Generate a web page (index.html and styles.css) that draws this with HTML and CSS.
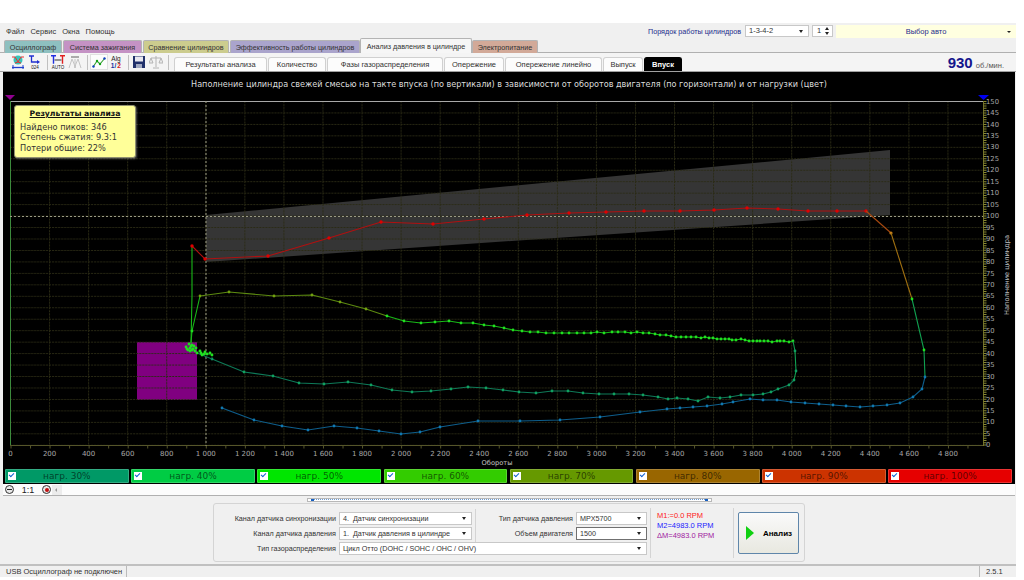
FILE: index.html
```html
<!DOCTYPE html>
<html lang="ru">
<head>
    <meta charset="UTF-8">
    <title>Анализ давления в цилиндре</title>
    <link rel="stylesheet" href="styles.css">
</head>
<body>
<div class="window">
    <div class="topbar">
        <div class="menu">
            <span>Файл</span>
            <span>Сервис</span>
            <span>Окна</span>
            <span>Помощь</span>
        </div>
        <div class="top-controls">
            <span class="order-label">Порядок работы цилиндров</span>
            <div class="select order-select">1-3-4-2</div>
            <div class="spinner">1<span class="spin-arrows"></span></div>
            <div class="car-select">Выбор авто</div>
        </div>
    </div>

    <div class="tabs">
        <div class="tab tab-teal">Осциллограф</div>
        <div class="tab tab-pink">Система зажигания</div>
        <div class="tab tab-olive">Сравнение цилиндров</div>
        <div class="tab tab-violet">Эффективность работы цилиндров</div>
        <div class="tab tab-active">Анализ давления в цилиндре</div>
        <div class="tab tab-brown">Электропитание</div>
    </div>

    <div class="toolbar">
        <div class="tools">
            <!-- network -->
            <svg class="tool" viewBox="0 0 14 14">
                <circle cx="7" cy="5" r="4.500" fill="#38c4b8"/>
                <path d="M1 2h3l3 5 3-5h3M4 8l3-1 3 1" stroke="#e83030" fill="none"/>
                <path d="M1 12.500h12" stroke="#2040d0" stroke-width="1.300"/>
                <path d="M2 10v4M12 10v4" stroke="#2040d0"/>
            </svg>
            <!-- cursor 024 -->
            <svg class="tool tool-gap" viewBox="0 0 14 14">
                <path d="M1 1h5M3.500 1v6h7" stroke="#2030d0" fill="none" stroke-width="1.300"/>
                <path d="M9 5l3 2-3 2z" fill="#2030d0"/>
                <text class="tool-text" x="7" y="13.500">024</text>
            </svg>
            <span class="tool-sep"></span>
            <!-- auto -->
            <svg class="tool" viewBox="0 0 14 14">
                <path d="M0 .800h5M2.500 .800v8" stroke="#2030e0" stroke-width="1.400" fill="none"/>
                <path d="M9 .800h5M11.500 .800v8" stroke="#e02020" stroke-width="1.400" fill="none"/>
                <path d="M3.500 5h7" stroke="#333"/>
                <text class="tool-text" x="7" y="13.500">AUTO</text>
            </svg>
            <!-- cylinder, off -->
            <svg class="tool tool-gap" viewBox="0 0 14 14">
                <path d="M3 1h8v2H3z" fill="#aaa"/>
                <path d="M4 4L1 13M7 4v9M10 4l3 9M4 4q3 6 3 9M10 4q-3 6-3 9" stroke="#c4c4c4" fill="none"/>
            </svg>
            <span class="tool-sep"></span>
            <!-- curve -->
            <svg class="tool tool-on" viewBox="0 0 16 14">
                <path d="M2 12L6 6l3 3 5-6" stroke="#30a030" stroke-width="1.100" fill="none"/>
                <circle cx="2.500" cy="11.500" r="1.200" fill="#1040c0"/>
                <circle cx="6" cy="6" r="1.200" fill="#10a010"/>
                <circle cx="9" cy="9" r="1.200" fill="#10a010"/>
                <circle cx="13.500" cy="3.500" r="1.200" fill="#1040c0"/>
            </svg>
            <!-- algorithm -->
            <svg class="tool tool-alg" viewBox="0 0 14 14">
                <text class="alg-top" x="7" y="6">Alg</text>
                <text class="alg-one" x="4.500" y="13">1/</text>
                <text class="alg-two" x="10" y="13">2</text>
            </svg>
            <span class="tool-sep"></span>
            <!-- save -->
            <svg class="tool" viewBox="0 0 14 14">
                <path d="M1 1h12v12H1z" fill="#20306a"/>
                <path d="M3 1.500h8v5H3z" fill="#e8e8f0"/>
                <path d="M4 9h6v4H4z" fill="#a0a8c0"/>
            </svg>
            <!-- scales, off -->
            <svg class="tool tool-gap" viewBox="0 0 14 14">
                <path d="M7 1v11M4 13h6M2 3h10" stroke="#b4b4b4" fill="none"/>
                <path d="M2 3L0 8h4zM12 3l-2 5h4z" stroke="#b4b4b4" fill="#eee"/>
            </svg>
            <span class="tool-sep"></span>
        </div>
        <div class="subtabs">
            <div class="subtab sub-results">Результаты анализа</div>
            <div class="subtab sub-count">Количество</div>
            <div class="subtab sub-phases">Фазы газораспределения</div>
            <div class="subtab sub-advance">Опережение</div>
            <div class="subtab sub-linear">Опережение линейно</div>
            <div class="subtab sub-exhaust">Выпуск</div>
            <div class="subtab subtab-active">Впуск</div>
        </div>
        <div class="rpm"><b>930</b> об./мин.</div>
    </div>

    <div class="chart">
        <svg class="plot" viewBox="3 72 1012 396">
            <defs>
                <pattern id="grid" x="10" y="101" width="39.060" height="11.460" patternUnits="userSpaceOnUse">
                    <path class="grid-line" d="M.5 0V11.460M0 .5H39.060"/>
                </pattern>
                <marker id="dot-red" markerWidth="5" markerHeight="5" refX="2.500" refY="2.500" markerUnits="userSpaceOnUse">
                    <circle cx="2.500" cy="2.500" r="1.700" fill="#e00000"/>
                </marker>
                <marker id="dot-orange" markerWidth="5" markerHeight="5" refX="2.500" refY="2.500" markerUnits="userSpaceOnUse">
                    <circle cx="2.500" cy="2.500" r="1.600" fill="#c8801a"/>
                </marker>
                <marker id="dot-lime" markerWidth="5" markerHeight="5" refX="2.500" refY="2.500" markerUnits="userSpaceOnUse">
                    <circle cx="2.500" cy="2.500" r="1.400" fill="#20e020"/>
                </marker>
                <marker id="dot-olive" markerWidth="5" markerHeight="5" refX="2.500" refY="2.500" markerUnits="userSpaceOnUse">
                    <circle cx="2.500" cy="2.500" r="1.400" fill="#70a010"/>
                </marker>
                <marker id="dot-teal" markerWidth="5" markerHeight="5" refX="2.500" refY="2.500" markerUnits="userSpaceOnUse">
                    <circle cx="2.500" cy="2.500" r="1.400" fill="#10a060"/>
                </marker>
                <marker id="dot-blue" markerWidth="5" markerHeight="5" refX="2.500" refY="2.500" markerUnits="userSpaceOnUse">
                    <circle cx="2.500" cy="2.500" r="1.400" fill="#1078b0"/>
                </marker>
            </defs>

            <text class="plot-title" x="509" y="84">Наполнение цилиндра свежей смесью на такте впуска (по вертикали) в зависимости от оборотов двигателя (по горизонтали) и от нагрузки (цвет)</text>

            <rect class="zone-purple" x="137" y="342" width="60" height="58"/>
            <polygon class="zone-gray" points="206,215 890,150 890,215 206,262"/>
            <rect x="10" y="101" width="973" height="345" fill="url(#grid)"/>

            <path class="axis-top" d="M10 101.500H983"/>
            <path class="axis-left" d="M10.500 101V446"/>
            <path class="axis-right" d="M983.500 101V446"/>
            <path class="axis-right-ticks" d="M985 101V446"/>
            <path class="axis-bottom" d="M10 445.500H983"/>
            <path class="axis-bottom-ticks" d="M10.500 447H983"/>
            <path class="cross" d="M206 101V446M10 216.500H983"/>

            <polygon class="flag-purple" points="5,95 15,95 10,100"/>
            <polygon class="flag-blue" points="978,95 989,95 983.500,100"/>

            <!-- 100% -->
            <polyline class="curve c-lime" points="192,246 192,296 191,343"/>
            <polyline class="curve c-red" marker-start="url(#dot-red)" marker-mid="url(#dot-red)" marker-end="url(#dot-red)"
                points="192,246 205,259 268,256 329,238 381,222 433,224 484,219 527,215 569,213 606,212 644,211 680,211 714,210 747,208 778,209 808,211 837,211 866,211"/>
            <polyline class="curve c-orange" marker-end="url(#dot-orange)" points="866,211 891,233"/>
            <polyline class="curve c-amber" points="891,233 912,299"/>
            <polyline class="curve c-green" marker-start="url(#dot-lime)" marker-mid="url(#dot-lime)" points="912,299 924,350 925,377"/>
            <polyline class="curve c-blue" marker-start="url(#dot-blue)" marker-mid="url(#dot-blue)" marker-end="url(#dot-blue)"
                points="925,377 922,389 913,397 900,403 887,405 873,406 860,407 846,406 833,405 819,404 805,403 791,402 777,400 763,400 750,399 733,402 722,404 707,406 693,407 680,408 667,409 640,412 600,417 560,420 520,421 478,421 440,427 420,432 401,434 379,431 357,428 334,426 308,430 282,426 254,420 222,408"/>

            <!-- 40-70% -->
            <polyline class="curve c-lime" marker-mid="url(#dot-lime)" points="191,343 192,331 200,296"/>
            <polyline class="curve c-olive" marker-start="url(#dot-olive)" marker-mid="url(#dot-olive)"
                points="200,296 229,292 274,296 312,295 340,302 366,309 387,316"/>
            <polyline class="curve c-lime" marker-start="url(#dot-lime)" marker-mid="url(#dot-lime)" marker-end="url(#dot-lime)"
                points="387,316 404,321 421,323 435,322 449,321 461,323 473,323 484,325 494,326 504,328 513,330 522,331 530,332 538,332 546,333 554,333 562,333 569,333 577,333 584,333 591,333 597,332 604,333 612,332 618,332 625,332 631,333 637,332 643,333 649,333 655,334 660,335 666,335 671,336 676,337 681,337 686,337 691,337 696,337 701,338 705,337 709,338 713,338 717,339 721,339 725,339 729,339 732,340 736,340 741,339 745,340 749,341 753,341 757,341 760,341 764,341 768,341 772,342 777,341 780,341 784,341 789,342 793,341"/>
            <polyline class="curve c-green" marker-mid="url(#dot-teal)" points="793,341 795,351 796,371 794,380"/>
            <polyline class="curve c-teal" marker-start="url(#dot-teal)" marker-mid="url(#dot-teal)" marker-end="url(#dot-teal)"
                points="794,380 789,385 778,389 771,392 763,394 753,395 741,395 730,397 720,398 708,397 698,401 688,399 677,398 668,399 658,397 643,395 629,394 614,394 599,394 583,393 568,391 552,391 536,393 519,392 503,390 486,388 468,387 451,389 431,391 412,392 392,390 371,385 348,382 324,384 299,383 273,376 244,372 212,359"/>
            <polyline class="curve c-teal" points="212,359 197,353"/>
            <polyline class="cluster" marker-start="url(#dot-lime)" marker-mid="url(#dot-lime)" marker-end="url(#dot-lime)"
                points="186,347 189,344 192,345 190,348 194,346 188,350 192,350 196,348 191,346 187,349 193,349 190,351 195,351 197,353 200,351 202,355 205,352 207,354 210,353 212,355 204,354 201,353"/>

            <text class="y-label" x="986" y="102">150</text>
            <text class="y-label" x="986" y="113">145</text>
            <text class="y-label" x="986" y="125">140</text>
            <text class="y-label" x="986" y="136">135</text>
            <text class="y-label" x="986" y="147">130</text>
            <text class="y-label" x="986" y="159">125</text>
            <text class="y-label" x="986" y="170">120</text>
            <text class="y-label" x="986" y="182">115</text>
            <text class="y-label" x="986" y="193">110</text>
            <text class="y-label" x="986" y="205">105</text>
            <text class="y-label" x="986" y="216">100</text>
            <text class="y-label" x="986" y="228">95</text>
            <text class="y-label" x="986" y="239">90</text>
            <text class="y-label" x="986" y="251">85</text>
            <text class="y-label" x="986" y="262">80</text>
            <text class="y-label" x="986" y="274">75</text>
            <text class="y-label" x="986" y="285">70</text>
            <text class="y-label" x="986" y="296">65</text>
            <text class="y-label" x="986" y="308">60</text>
            <text class="y-label" x="986" y="319">55</text>
            <text class="y-label" x="986" y="331">50</text>
            <text class="y-label" x="986" y="342">45</text>
            <text class="y-label" x="986" y="354">40</text>
            <text class="y-label" x="986" y="365">35</text>
            <text class="y-label" x="986" y="377">30</text>
            <text class="y-label" x="986" y="388">25</text>
            <text class="y-label" x="986" y="400">20</text>
            <text class="y-label" x="986" y="411">15</text>
            <text class="y-label" x="986" y="422">10</text>
            <text class="y-label" x="986" y="434">5</text>
            <text class="y-label" x="986" y="445">0</text>

            <text class="x-label" x="10.500" y="456">0</text>
            <text class="x-label" x="49.600" y="456">200</text>
            <text class="x-label" x="88.600" y="456">400</text>
            <text class="x-label" x="127.700" y="456">600</text>
            <text class="x-label" x="166.700" y="456">800</text>
            <text class="x-label" x="205.800" y="456">1 000</text>
            <text class="x-label" x="244.900" y="456">1 200</text>
            <text class="x-label" x="283.900" y="456">1 400</text>
            <text class="x-label" x="323" y="456">1 600</text>
            <text class="x-label" x="362" y="456">1 800</text>
            <text class="x-label" x="401.100" y="456">2 000</text>
            <text class="x-label" x="440.200" y="456">2 200</text>
            <text class="x-label" x="479.200" y="456">2 400</text>
            <text class="x-label" x="518.300" y="456">2 600</text>
            <text class="x-label" x="557.300" y="456">2 800</text>
            <text class="x-label" x="596.400" y="456">3 000</text>
            <text class="x-label" x="635.500" y="456">3 200</text>
            <text class="x-label" x="674.500" y="456">3 400</text>
            <text class="x-label" x="713.600" y="456">3 600</text>
            <text class="x-label" x="752.600" y="456">3 800</text>
            <text class="x-label" x="791.700" y="456">4 000</text>
            <text class="x-label" x="830.800" y="456">4 200</text>
            <text class="x-label" x="869.800" y="456">4 400</text>
            <text class="x-label" x="908.900" y="456">4 600</text>
            <text class="x-label" x="947.900" y="456">4 800</text>

            <text class="axis-title" x="497" y="465">Обороты</text>
            <text class="axis-title" transform="translate(1009 275) rotate(-90)">Наполнение цилиндра</text>
        </svg>

        <div class="results">
            <div class="results-title">Результаты анализа</div>
            <div>Найдено пиков: 346</div>
            <div>Степень сжатия: 9.3:1</div>
            <div>Потери общие: 22%</div>
        </div>

        <div class="loads">
            <div class="load load-30"><span class="check"></span>нагр. 30%</div>
            <div class="load load-40"><span class="check"></span>нагр. 40%</div>
            <div class="load load-50"><span class="check"></span>нагр. 50%</div>
            <div class="load load-60"><span class="check"></span>нагр. 60%</div>
            <div class="load load-70"><span class="check"></span>нагр. 70%</div>
            <div class="load load-80"><span class="check"></span>нагр. 80%</div>
            <div class="load load-90"><span class="check"></span>нагр. 90%</div>
            <div class="load load-100"><span class="check"></span>нагр. 100%</div>
        </div>
    </div>

    <div class="zoombar">
        <span class="zoom-btn zoom-minus"></span>
        <span class="zoom-value">1:1</span>
        <span class="zoom-btn zoom-plus"></span>
        <span class="scroll-left"></span>
    </div>

    <div class="bottom">
        <div class="splitter"></div>
        <div class="panel">
            <div class="fields">
                <label class="field-label">Канал датчика синхронизации</label>
                <div class="select">4.&nbsp; Датчик синхронизации</div>
                <label class="field-label field-split">Тип датчика давления</label>
                <div class="select">MPX5700</div>
                <label class="field-label">Канал датчика давления</label>
                <div class="select">1.&nbsp; Датчик давления в цилиндре</div>
                <label class="field-label field-split">Объем двигателя</label>
                <div class="select select-focus">1500</div>
                <label class="field-label">Тип газораспределения</label>
                <div class="select select-wide">Цикл Отто (DOHC / SOHC / OHC / OHV)</div>
            </div>
            <div class="readouts">
                <div class="m1">M1:=0.0 RPM</div>
                <div class="m2">M2=4983.0 RPM</div>
                <div class="dm">ΔM=4983.0 RPM</div>
            </div>
            <div class="action">
                <button class="analyze"><span class="play"></span>Анализ</button>
            </div>
        </div>
    </div>

    <div class="status">
        <div class="status-main">USB Осциллограф не подключен</div>
        <div class="status-fill"></div>
        <div class="status-ver">2.5.1</div>
    </div>
</div>
</body>
</html>
```

FILE: styles.css
```css
body {
    margin: 0;
    height: 580px;
    overflow: hidden;
    background: #fff;
    font-family: 'Liberation Sans', Arial, sans-serif;
    font-size: 7.500px;
    color: #333;
}

.window {
    width: 1016px;
    height: 554px;
    margin-top: 23px;
    background: #f0f0f0;
    display: flex;
    flex-direction: column;
}

/* top line */
.topbar {
    height: 17px;
    display: flex;
    align-items: center;
    flex-shrink: 0;
}

.menu {
    display: flex;
    gap: 6px;
    padding-left: 6px;
}

.top-controls {
    margin-left: auto;
    display: flex;
    align-items: center;
    margin-top: -1px;
}

.order-label {
    color: #1c2c8c;
    font-size: 7.200px;
    margin-right: 4px;
}

.select {
    position: relative;
    box-sizing: border-box;
    height: 13px;
    line-height: 11px;
    padding-left: 3px;
    background: #fff;
    border: 1px solid #c8c8c8;
    white-space: nowrap;
}

.select::after {
    content: "";
    position: absolute;
    right: 5px;
    top: 4px;
    border: 2.500px solid transparent;
    border-top: 3px solid #222;
    border-bottom: 0;
}

.order-select {
    width: 64px;
    height: 12px;
    line-height: 10px;
}

.spinner {
    box-sizing: border-box;
    position: relative;
    width: 21px;
    height: 12px;
    line-height: 10px;
    margin-left: 3px;
    padding-left: 4px;
    background: #fff;
    border: 1px solid #c8c8c8;
}

.spin-arrows {
    position: absolute;
    right: 3px;
    top: 1px;
    width: 0;
    height: 0;
    border-left: 2.500px solid transparent;
    border-right: 2.500px solid transparent;
    border-bottom: 3px solid #222;
}

.spin-arrows::after {
    content: "";
    position: absolute;
    left: -2.500px;
    top: 5px;
    border-left: 2.500px solid transparent;
    border-right: 2.500px solid transparent;
    border-top: 3px solid #222;
}

.car-select {
    position: relative;
    width: 180px;
    height: 13px;
    line-height: 13px;
    margin-left: 3px;
    background: #ffffe0;
    color: #1c2c8c;
    text-align: center;
}

.car-select::after {
    content: "";
    position: absolute;
    right: 5px;
    top: 6px;
    border: 2px solid transparent;
    border-top: 2px solid #222;
    border-bottom: 0;
}

/* main tabs */
.tabs {
    height: 13px;
    box-sizing: border-box;
    display: flex;
    align-items: flex-end;
    padding-left: 4px;
    gap: 1px;
    flex-shrink: 0;
    border-bottom: 1px solid #b0b0b0;
}

.tab {
    height: 13px;
    line-height: 13px;
    font-size: 7.200px;
    text-align: center;
    border: 1px solid #b4b4b4;
    border-bottom: 0;
    border-radius: 2px 2px 0 0;
    box-sizing: border-box;
    white-space: nowrap;
    margin-bottom: -1px;
}

.tab-teal { background: #8ec0c0; width: 58px; }
.tab-pink { background: #c492c4; width: 79px; }
.tab-olive { background: #cccc8e; width: 86px; }
.tab-violet { background: #aaa4cc; width: 130px; }
.tab-brown { background: #d2a998; width: 66px; margin-left: -1px; }

.tab-active {
    width: 112px;
    height: 15px;
    line-height: 15px;
    background: #f6f6f6;
    margin-left: -1px;
    position: relative;
}

/* second line */
.toolbar {
    height: 19px;
    box-sizing: border-box;
    display: flex;
    align-items: stretch;
    flex-shrink: 0;
    border-bottom: 1px solid #a0a0a0;
    background: #f4f4f4;
}

.tools {
    width: 174px;
    padding-left: 11px;
    box-sizing: border-box;
    display: flex;
    align-items: center;
}

.tool {
    width: 14px;
    height: 14px;
    flex-shrink: 0;
}

.tool-gap {
    margin-left: 3px;
}

.tool-on {
    width: 16px;
    background: #fcfcfc;
    outline: 1px solid #e0e0e0;
}

.tool-alg {
    margin-left: 2px;
}

.tool-sep {
    width: 1px;
    height: 15px;
    background: #c0c0c0;
    margin: 0 3px 0 5px;
}

.tool-text {
    font-size: 4.500px;
    text-anchor: middle;
    fill: #111;
}

.alg-top {
    font-size: 6.500px;
    text-anchor: middle;
    fill: #222;
}

.alg-one {
    font-size: 6.500px;
    font-weight: bold;
    text-anchor: middle;
    fill: #1030a0;
}

.alg-two {
    font-size: 6.500px;
    font-weight: bold;
    text-anchor: middle;
    fill: #d02020;
}

.subtabs {
    display: flex;
    gap: 1px;
    align-items: flex-end;
}

.subtab {
    box-sizing: border-box;
    height: 14px;
    line-height: 14px;
    text-align: center;
    border: 1px solid #d0d0d0;
    border-bottom: 0;
    border-radius: 3px 3px 0 0;
    background: #fcfcfc;
    white-space: nowrap;
}

.sub-results { width: 93px; }
.sub-count { width: 58px; }
.sub-phases { width: 116px; }
.sub-advance { width: 60px; }
.sub-linear { width: 97px; }
.sub-exhaust { width: 40px; }

.subtab-active {
    width: 38px;
    background: #000;
    border-color: #000;
    color: #fff;
    font-weight: bold;
}

.rpm {
    margin-left: auto;
    padding-right: 12px;
    color: #555;
    align-self: center;
}

.rpm b {
    font-size: 15px;
    color: #14148c;
    margin-right: 1px;
}

/* chart */
.chart {
    position: relative;
    margin: 0 1px 0 3px;
    height: 412px;
    flex-shrink: 0;
    background: #000;
}

.plot {
    display: block;
    width: 1012px;
    height: 396px;
    font-family: 'DejaVu Sans', Verdana, sans-serif;
}

.plot-title {
    font-size: 8.100px;
    fill: #dcdcdc;
    text-anchor: middle;
    dominant-baseline: central;
}

.zone-purple { fill: #800080; }
.zone-gray { fill: #353535; }

.grid-line {
    fill: none;
    stroke: #2a2a14;
    stroke-width: 1;
    stroke-dasharray: 2 1;
}

.axis-top { stroke: #a8a8a8; fill: none; }
.axis-left { stroke: #3c8a3c; fill: none; }
.axis-right { stroke: #6c6c28; fill: none; }
.axis-right-ticks { stroke: #8a8a30; stroke-width: 3; stroke-dasharray: 1 1.290; fill: none; }
.axis-bottom { stroke: #55552a; fill: none; }
.axis-bottom-ticks { stroke: #55552a; stroke-width: 3; stroke-dasharray: 1 18.530; fill: none; }

.cross {
    stroke: #9a9a84;
    stroke-dasharray: 2 2;
    fill: none;
}

.flag-purple { fill: #900090; }
.flag-blue { fill: #0000f0; }

.curve {
    fill: none;
    stroke-width: 1.100;
}

.cluster {
    fill: none;
    stroke: #129a30;
    stroke-width: 0.600;
}

.c-red { stroke: #b01010; }
.c-orange { stroke: #a84a10; }
.c-amber { stroke: #a07010; }
.c-lime { stroke: #18b818; }
.c-olive { stroke: #5c8a10; }
.c-green { stroke: #10a050; }
.c-teal { stroke: #0e7a58; }
.c-blue { stroke: #0e5e8c; }

.y-label {
    font-size: 6.800px;
    fill: #a8a8a8;
    dominant-baseline: central;
}

.x-label {
    font-size: 7px;
    fill: #a8a8a8;
    text-anchor: middle;
}

.axis-title {
    font-size: 6.700px;
    fill: #c4c4c4;
    text-anchor: middle;
}

.results {
    position: absolute;
    left: 11px;
    top: 33px;
    width: 122px;
    height: 53px;
    box-sizing: border-box;
    padding: 3px 5px;
    background: #ffff99;
    border: 1px solid #909070;
    border-radius: 3px;
    box-shadow: 1px 1px 2px rgba(255, 255, 255, 0.300);
    font-family: 'DejaVu Sans', Verdana, sans-serif;
    font-size: 8.200px;
    line-height: 10.500px;
    color: #333;
}

.results-title {
    font-weight: bold;
    font-size: 7.700px;
    text-align: center;
    text-decoration: underline;
    color: #111;
    margin-bottom: 2px;
}

.loads {
    display: flex;
    gap: 2.400px;
    height: 14px;
    margin-top: 1px;
    padding: 0 3px 0 2px;
}

.load {
    box-sizing: border-box;
    position: relative;
    flex: 1;
    height: 14px;
    line-height: 13px;
    font-family: 'DejaVu Sans', Verdana, sans-serif;
    font-size: 9px;
    text-align: center;
    color: rgba(0, 0, 0, 0.600);
    border: 1px solid rgba(255, 255, 255, 0.200);
    border-radius: 1px;
}

.check {
    position: absolute;
    left: 2px;
    top: 2px;
    width: 8px;
    height: 8px;
    background: #fff;
}

.check::after {
    content: "";
    position: absolute;
    left: 1px;
    top: 1px;
    width: 4px;
    height: 2px;
    border-left: 1.500px solid #1060d0;
    border-bottom: 1.500px solid #1060d0;
    transform: rotate(-45deg);
}

.load-30 { background: #009966; }
.load-40 { background: #00cc44; }
.load-50 { background: #00e600; }
.load-60 { background: #33cc00; }
.load-70 { background: #669900; }
.load-80 { background: #996600; }
.load-90 { background: #cc3300; }
.load-100 { background: #e60000; }

/* zoom line */
.zoombar {
    height: 12px;
    box-sizing: border-box;
    margin: 0 1px 0 3px;
    background: #fcfcfc;
    border-bottom: 1px solid #b0b0b0;
    display: flex;
    align-items: center;
    flex-shrink: 0;
}

.zoom-btn {
    box-sizing: border-box;
    width: 9px;
    height: 9px;
    border-radius: 50%;
    border: 1px solid #333;
    background: #e8e8e8;
    position: relative;
}

.zoom-minus {
    margin-left: 2px;
}

.zoom-minus::after {
    content: "";
    position: absolute;
    left: 1px;
    top: 2.500px;
    width: 5px;
    height: 1px;
    background: #222;
}

.zoom-plus::after {
    content: "";
    position: absolute;
    left: 1.500px;
    top: 1.500px;
    width: 4px;
    height: 4px;
    border-radius: 50%;
    background: #c01010;
}

.zoom-value {
    width: 28px;
    text-align: center;
    font-size: 9px;
    color: #222;
}

.scroll-left {
    width: 10px;
    height: 10px;
    margin-left: 1px;
    background: #ececec;
    position: relative;
}

.scroll-left::after {
    content: "";
    position: absolute;
    left: 3px;
    top: 3px;
    border: 2px solid transparent;
    border-right: 2px solid #999;
    border-left: 0;
}

/* bottom panel */
.bottom {
    height: 70px;
    flex-shrink: 0;
    padding-top: 2px;
    box-sizing: border-box;
    border-bottom: 2px solid #c0c0c0;
    font-size: 7.200px;
}

.splitter {
    position: relative;
    margin-left: 307px;
    width: 405px;
    height: 4px;
    box-sizing: border-box;
    border: 1px solid #b8b8b8;
    background: #fff;
}

.splitter::before {
    content: "";
    position: absolute;
    left: 6px;
    right: 6px;
    top: 0;
    border-top: 1px dotted #6c9ad0;
}

.splitter::after {
    content: "";
    position: absolute;
    left: 3px;
    right: 3px;
    top: 0;
    height: 2px;
    background: linear-gradient(to right, #1860c0 3px, transparent 3px, transparent calc(100% - 3px), #1860c0 calc(100% - 3px));
}

.panel {
    box-sizing: border-box;
    margin: 1px 0 0 213px;
    width: 592px;
    height: 59px;
    padding-top: 8px;
    background: #f0f0f0;
    border: 1px solid #d4d4d4;
    border-radius: 3px;
    display: flex;
}

.fields {
    display: grid;
    grid-template-columns: 122px 133px 98px 71px;
    grid-auto-rows: 13px;
    column-gap: 3px;
    row-gap: 2px;
    height: 43px;
}

.field-label {
    text-align: right;
    line-height: 13px;
    white-space: nowrap;
}

.field-split {
    border-left: 1px solid #d4d4d4;
    margin: -3px 0;
    padding: 3px 0;
}

.select-wide {
    grid-column: 2 / span 3;
}

.select-focus {
    border-color: #707070;
}

.readouts {
    margin: -4px 0 -4px 3px;
    padding: 3px 0 0 6px;
    width: 84px;
    box-sizing: border-box;
    border-left: 1px solid #d4d4d4;
    border-right: 1px solid #d4d4d4;
    height: 50px;
    line-height: 10px;
    font-size: 7.500px;
    white-space: nowrap;
}

.m1 { color: #ff2020; }
.m2 { color: #2020ff; }
.dm { color: #a020a0; }

.action {
    padding-left: 4px;
}

.analyze {
    width: 61px;
    height: 42px;
    padding: 0 0 0 7px;
    display: flex;
    align-items: center;
    background: linear-gradient(to bottom, #fafafa, #e8e8e0);
    border: 1px solid #5f86aa;
    border-radius: 2px;
    font-family: 'Liberation Sans', Arial, sans-serif;
    font-size: 8px;
    font-weight: bold;
    color: #000;
}

.play {
    width: 0;
    height: 0;
    margin-right: 9px;
    border-top: 7px solid transparent;
    border-bottom: 7px solid transparent;
    border-left: 8px solid #10d010;
}

/* status */
.status {
    height: 11px;
    display: flex;
    gap: 2px;
    padding-left: 3px;
    line-height: 11px;
    flex-shrink: 0;
}

.status-main {
    width: 124px;
    padding-left: 3px;
    box-sizing: border-box;
    border-right: 1px solid #bbb;
    white-space: nowrap;
}

.status-fill {
    width: 851px;
    border-right: 1px solid #bbb;
    box-sizing: border-box;
}

.status-ver {
    padding-left: 4px;
}
```
